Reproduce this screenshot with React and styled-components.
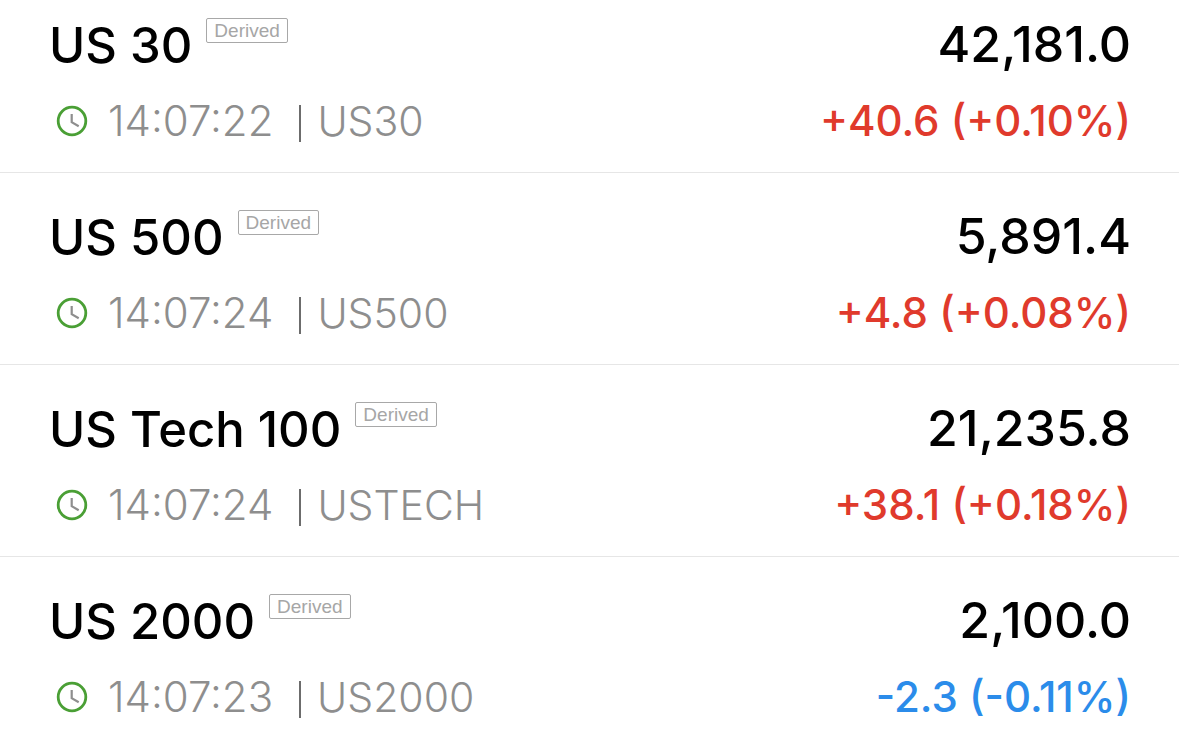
import styled, { createGlobalStyle } from "styled-components";

const GlobalStyle = createGlobalStyle`
    * {
        box-sizing: border-box;
    }

    body {
        margin: 0;
        background: #ffffff;
        font-family: Inter, "Liberation Sans", sans-serif;
        overflow: hidden;
    }
`;

const List = styled.ul`
    list-style: none;
    margin: 0;
    padding: 0;
    margin-top: -19px;
`;

const Row = styled.li`
    display: flex;
    justify-content: space-between;
    padding: 33px 48px 26px 49px;
    border-bottom: 1px solid #e6e6e6;
`;

const Info = styled.div`
    display: flex;
    flex-direction: column;
    gap: 22px;
`;

const Figures = styled(Info)`
    align-items: flex-end;
`;

const Heading = styled.div`
    display: flex;
    align-items: flex-start;
    gap: 14px;
    height: 60px;
`;

const Name = styled.h2`
    margin: 0;
    padding-top: 2px;
    font-size: 49px;
    font-weight: 500;
    line-height: 60px;
    color: #000000;
`;

const Badge = styled.span`
    margin-top: 4px;
    padding: 0 7px;
    border: 1px solid #a8a8a8;
    border-radius: 2px;
    font-family: "Liberation Sans", sans-serif;
    font-size: 19px;
    line-height: 23px;
    color: #a6a6a6;
`;

const Meta = styled.div`
    display: flex;
    align-items: center;
    height: 50px;
    padding-left: 7px;
    font-weight: 300;
    line-height: 50px;
    color: #8e8e8e;
`;

const Clock = styled.svg`
    width: 32px;
    height: 32px;
    margin-right: 20px;
`;

const Time = styled.time`
    font-size: 42px;
`;

const Symbol = styled.span`
    font-size: 41px;
`;

const Divider = styled.span`
    width: 2px;
    height: 37px;
    margin: 5px 16px 0 26px;
    background: #6c6c6c;
`;

const Price = styled.div`
    font-size: 50px;
    font-weight: 500;
    line-height: 60px;
    color: #000000;
`;

const Change = styled.div`
    font-size: 42px;
    font-weight: 500;
    line-height: 50px;
    color: ${({ $down }) => ($down ? "#2b8cea" : "#e03a2c")};
`;

const quotes = [
    { name: "US 30", time: "14:07:22", symbol: "US30", price: "42,181.0", change: "+40.6 (+0.10%)" },
    { name: "US 500", time: "14:07:24", symbol: "US500", price: "5,891.4", change: "+4.8 (+0.08%)" },
    { name: "US Tech 100", time: "14:07:24", symbol: "USTECH", price: "21,235.8", change: "+38.1 (+0.18%)" },
    { name: "US 2000", time: "14:07:23", symbol: "US2000", price: "2,100.0", change: "-2.3 (-0.11%)" },
];

function Quote({ name, time, symbol, price, change }) {
    return (
        <Row>
            <Info>
                <Heading>
                    <Name>{name}</Name>
                    <Badge>Derived</Badge>
                </Heading>
                <Meta>
                    <Clock viewBox="0 0 32 32" fill="none" aria-hidden="true">
                        <circle cx="16" cy="16" r="13.8" stroke="#4a9f35" strokeWidth="2.8" />
                        <path d="M15.7 9v8.2l7 4" stroke="#8e8e8e" strokeWidth="2.2" />
                    </Clock>
                    <Time>{time}</Time>
                    <Divider />
                    <Symbol>{symbol}</Symbol>
                </Meta>
            </Info>
            <Figures>
                <Price>{price}</Price>
                <Change $down={change.startsWith("-")}>{change}</Change>
            </Figures>
        </Row>
    );
}

function App() {
    return (
        <>
            <GlobalStyle />
            <List>
                {quotes.map((quote) => (
                    <Quote key={quote.symbol} {...quote} />
                ))}
            </List>
        </>
    );
}

export default App;
